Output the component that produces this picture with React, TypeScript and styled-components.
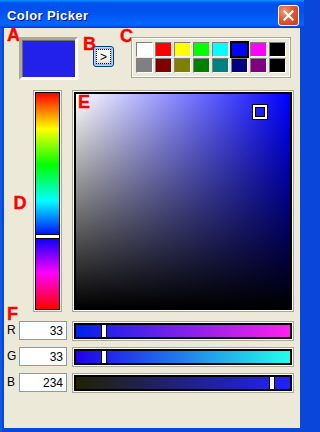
import React from "react";
import styled, { createGlobalStyle } from "styled-components";

const GlobalStyle = createGlobalStyle`
  html {
    background: #0a46d9;
  }
  body {
    margin: 0;
    padding: 0;
    font-family: "Liberation Sans", Arial, sans-serif;
  }
`;

const Window = styled.div`
  width: 304px;
  height: 432px;
  display: flex;
  flex-direction: column;
  box-sizing: border-box;
  overflow: hidden;
  background: #0a46d9;
`;

const TitleBar = styled.div`
  height: 28px;
  flex-shrink: 0;
  display: flex;
  align-items: center;
  justify-content: space-between;
  padding: 0 5px 0 7px;
  background: linear-gradient(
    #0997ff 0%,
    #0053ee 10%,
    #0050ee 40%,
    #0066ff 86%,
    #005bff 93%,
    #003dd7 97%,
    #003dd7 100%
  );
`;

const Title = styled.span`
  color: #fff;
  font: bold 13px "Liberation Sans", Arial, sans-serif;
  letter-spacing: 0.4px;
  text-shadow: 1px 1px #0f1089;
  margin-top: 2px;
`;

const CloseButton = styled.div`
  width: 21px;
  height: 21px;
  box-sizing: border-box;
  border: 1px solid #fff;
  border-radius: 3px;
  background: radial-gradient(circle at 30% 30%, #f29a7c 0%, #e2592f 45%, #c8391a 100%);
  display: flex;
  align-items: center;
  justify-content: center;
  margin-top: 2px;
`;

const Frame = styled.div`
  flex: 1;
  display: flex;
  padding: 0 4px 4px;
  background: linear-gradient(to right, #0a46d9, #166aee 1px, #0a46d9 2px);
`;

const Body = styled.div`
  flex: 1;
  display: flex;
  flex-direction: column;
  padding: 1px 0 0 3px;
  background: #ece9d8;
`;

const TopRow = styled.div`
  display: flex;
  align-items: flex-start;
`;

const Letter = styled.span<{ $top?: number; $left?: number }>`
  display: block;
  width: 13px;
  height: 13px;
  color: #ff0000;
  font: bold 18px/13px "Liberation Sans", Arial, sans-serif;
  -webkit-text-stroke: 0.4px #ff0000;
  margin-top: ${(p) => p.$top ?? 0}px;
  margin-left: ${(p) => p.$left ?? 0}px;
`;

const Swatch = styled.div<{ $color: string }>`
  width: 59px;
  height: 43px;
  margin: 8px 0 0 -1px;
  box-sizing: border-box;
  border: 3px solid;
  border-color: #aca899 #fff #fff #aca899;
  box-shadow: inset 1px 1px #716f64;
  background: ${(p) => p.$color};
`;

const PushButton = styled.div`
  width: 21px;
  height: 21px;
  margin: 17px 0 0 -3px;
  box-sizing: border-box;
  border: 1px solid #003c74;
  border-radius: 3px;
  background: linear-gradient(#ffffff, #f4f3ee 60%, #d6d0c5);
  box-shadow: inset 0 0 0 1px #c1d3fb, inset 0 0 0 2px #98b8ea;
  display: flex;
  padding: 2px;
`;

const FocusRing = styled.span`
  flex: 1;
  border: 1px dotted #000;
  display: flex;
  align-items: center;
  justify-content: center;
  font: 12px "Liberation Sans", Arial, sans-serif;
  color: #000;
`;

const Palette = styled.div`
  margin: 8px 0 0 -2px;
  display: grid;
  grid-template-columns: repeat(8, 17px);
  grid-auto-rows: 15px;
  column-gap: 2px;
  row-gap: 1px;
  padding: 4px;
  border: 1px solid #aca899;
  box-shadow: inset 1px 1px #fff, -1px -1px #fff inset;
`;

const Cell = styled.div<{ $color: string; $selected?: boolean }>`
  box-sizing: border-box;
  background: ${(p) => p.$color};
  border: 1px solid;
  border-color: ${(p) => (p.$selected ? "#000" : "#808080 #fff #fff #808080")};
  box-shadow: ${(p) => (p.$selected ? "0 0 0 1px #000" : "none")};
`;

const MiddleRow = styled.div`
  display: flex;
  margin-top: 10px;
`;

const SideLabel = styled.div`
  width: 26px;
  display: flex;
  align-items: center;
  justify-content: center;
  padding-top: 5px;
  box-sizing: border-box;
`;

const Well = styled.div<{ $gap?: number }>`
  border: 1px solid #aca899;
  padding: 1px;
  background: #fff;
  margin-left: ${(p) => p.$gap ?? 0}px;
  position: relative;
  flex-shrink: 0;
`;

const Surface = styled.div<{ $w: number; $h: number; $edge: number; $fill: string }>`
  width: ${(p) => p.$w}px;
  height: ${(p) => p.$h}px;
  box-sizing: border-box;
  border: ${(p) => p.$edge}px solid #000;
  background: ${(p) => p.$fill};
  position: relative;
`;

const HueMarker = styled.div`
  position: absolute;
  left: -1px;
  right: -1px;
  height: 5px;
  box-sizing: border-box;
  border: 1px solid #000;
  background: #fff;
`;

const AreaMarker = styled.div`
  position: absolute;
  width: 14px;
  height: 14px;
  box-sizing: border-box;
  border: 2px solid #fff;
  box-shadow: 0 0 0 1px #000, inset 0 0 0 1px #000;
`;

const AreaLabel = styled(Letter)`
  position: absolute;
  left: 2px;
  top: 2px;
`;

const FRow = styled.div`
  margin-top: -4px;
`;

const ChannelList = styled.div`
  display: flex;
  flex-direction: column;
  gap: 6px;
`;

const ChannelRow = styled.div`
  display: flex;
  align-items: flex-start;
  height: 20px;
`;

const ChannelName = styled.span`
  width: 12px;
  font: 12px/19px "Liberation Sans", Arial, sans-serif;
  color: #000;
`;

const ValueBox = styled.input`
  width: 48px;
  height: 19px;
  box-sizing: border-box;
  border: 1px solid #7f9db9;
  background: #fff;
  padding: 0 3px;
  margin: 0 5px 0 0;
  text-align: right;
  font: 12px "Liberation Sans", Arial, sans-serif;
  color: #000;
  outline: none;
`;

const Thumb = styled.div`
  position: absolute;
  top: -1px;
  bottom: -1px;
  width: 6px;
  box-sizing: border-box;
  border: 1px solid #000;
  background: #fff;
`;

const palette = [
  "#ffffff", "#ff0000", "#ffff00", "#00ff00", "#00ffff", "#0000ff", "#ff00ff", "#000000",
  "#808080", "#800000", "#808000", "#008000", "#008080", "#000080", "#800080", "#000000",
];

const r = 33;
const g = 33;
const b = 234;
const INNER = 214;

const channels = [
  { name: "R", value: r, fill: `linear-gradient(to right, rgb(0,${g},${b}), rgb(255,${g},${b}))` },
  { name: "G", value: g, fill: `linear-gradient(to right, rgb(${r},0,${b}), rgb(${r},255,${b}))` },
  { name: "B", value: b, fill: `linear-gradient(to right, rgb(${r},${g},0), rgb(${r},${g},255))` },
];

const hueFill =
  "linear-gradient(to bottom, #f00 0%, #ff0 16.67%, #0f0 33.33%, #0ff 50%, #00f 66.67%, #f0f 83.33%, #f00 100%)";
const areaFill = "linear-gradient(to top, #000, rgba(0,0,0,0)), linear-gradient(to right, #fff, #00f)";

export default function App() {
  const max = Math.max(r, g, b);
  const min = Math.min(r, g, b);
  const sat = max === 0 ? 0 : 1 - min / max;
  const val = max / 255;

  return (
    <Window>
      <GlobalStyle />
      <TitleBar>
        <Title>Color Picker</Title>
        <CloseButton>
          <svg width="11" height="11" viewBox="0 0 11 11">
            <path d="M1.5 1.5 L9.5 9.5 M9.5 1.5 L1.5 9.5" stroke="#fff" strokeWidth="2.2" strokeLinecap="square" />
          </svg>
        </CloseButton>
      </TitleBar>
      <Frame>
        <Body>
          <TopRow>
            <Letter>A</Letter>
            <Swatch $color={`rgb(${r},${g},${b})`} />
            <Letter $top={9} $left={5}>B</Letter>
            <PushButton>
              <FocusRing>&gt;</FocusRing>
            </PushButton>
            <Letter $top={1} $left={6}>C</Letter>
            <Palette>
              {palette.map((c, i) => (
                <Cell key={i} $color={c} $selected={i === 5} />
              ))}
            </Palette>
          </TopRow>

          <MiddleRow>
            <SideLabel>
              <Letter>D</Letter>
            </SideLabel>
            <Well>
              <Surface $w={25} $h={218} $edge={1} $fill={hueFill}>
                <HueMarker style={{ top: (240 / 360) * 216 - 3 }} />
              </Surface>
            </Well>
            <Well $gap={10}>
              <Surface $w={218} $h={218} $edge={2} $fill={areaFill}>
                <AreaLabel>E</AreaLabel>
                <AreaMarker style={{ left: sat * INNER - 7, top: (1 - val) * INNER - 7 }} />
              </Surface>
            </Well>
          </MiddleRow>

          <FRow>
            <Letter>F</Letter>
          </FRow>

          <ChannelList>
            {channels.map((ch) => (
              <ChannelRow key={ch.name}>
                <ChannelName>{ch.name}</ChannelName>
                <ValueBox readOnly value={ch.value} />
                <Well>
                  <Surface $w={218} $h={16} $edge={2} $fill={ch.fill}>
                    <Thumb style={{ left: (ch.value / 255) * INNER - 3 }} />
                  </Surface>
                </Well>
              </ChannelRow>
            ))}
          </ChannelList>
        </Body>
      </Frame>
    </Window>
  );
}
